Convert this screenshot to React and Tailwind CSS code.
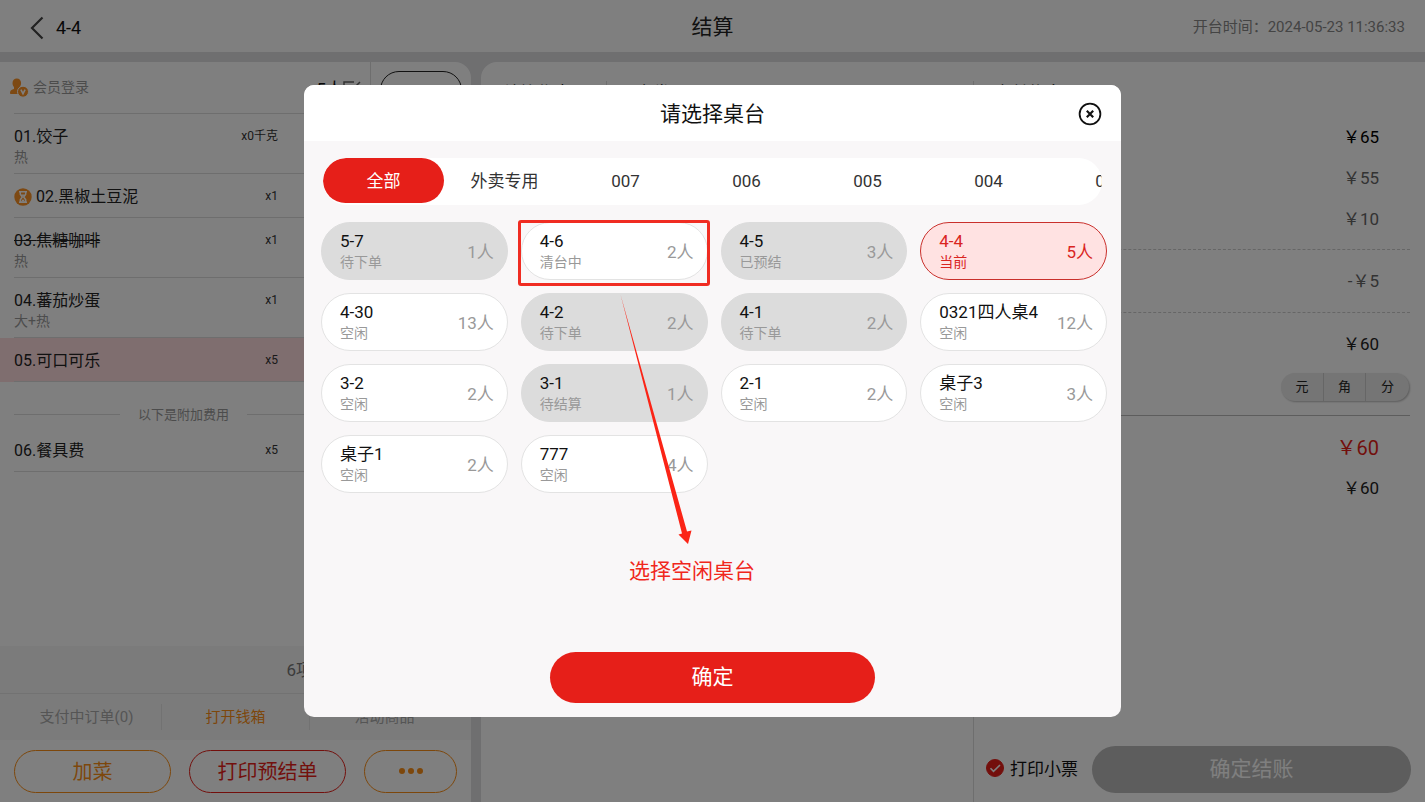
import React, { useState } from 'react';

const dishes = [
    { id: '01', name: '饺子', note: '热', qty: 'x0千克' },
    { id: '02', name: '黑椒土豆泥', qty: 'x1', waiting: true },
    { id: '03', name: '焦糖咖啡', note: '热', qty: 'x1', removed: true },
    { id: '04', name: '蕃茄炒蛋', note: '大+热', qty: 'x1' },
    { id: '05', name: '可口可乐', qty: 'x5', active: true },
];

const extras = [{ id: '06', name: '餐具费', qty: 'x5' }];

const areas = ['全部', '外卖专用', '007', '006', '005', '004', '003'];

const tables = [
    { name: '5-7', status: '待下单', seats: 1, busy: true },
    { name: '4-6', status: '清台中', seats: 2, marked: true },
    { name: '4-5', status: '已预结', seats: 3, busy: true },
    { name: '4-4', status: '当前', seats: 5, current: true },
    { name: '4-30', status: '空闲', seats: 13 },
    { name: '4-2', status: '待下单', seats: 2, busy: true },
    { name: '4-1', status: '待下单', seats: 2, busy: true },
    { name: '0321四人桌4', status: '空闲', seats: 12 },
    { name: '3-2', status: '空闲', seats: 2 },
    { name: '3-1', status: '待结算', seats: 1, busy: true },
    { name: '2-1', status: '空闲', seats: 2 },
    { name: '桌子3', status: '空闲', seats: 3 },
    { name: '桌子1', status: '空闲', seats: 2 },
    { name: '777', status: '空闲', seats: 4 },
];

/* ===================== ICONS ===================== */

const BackIcon = () => (
    <svg width="14" height="24" viewBox="0 0 14 24" fill="none" stroke="#444" strokeWidth="2.2">
        <path d="M12.5 1.5 2 12l10.5 10.5" />
    </svg>
);

const MemberIcon = () => (
    <svg width="19" height="20" viewBox="0 0 19 20">
        <path
            d="M6.8.5c2.600 0 4.300 1.900 4.300 4.400 0 1.800-.6 3.100-1.500 4.200v1.300l3 1.600V16H.8c-.5 0-.8-.3-.8-.8 0-2 .9-3 2.500-3.600l1.500-.7V9.100C3 8 2.500 6.700 2.500 4.900 2.500 2.400 4.200.5 6.800.5z"
            fill="#fb9226"
        />
        <circle cx="13" cy="13.700" r="5.500" fill="#fb9226" stroke="#fff" strokeWidth="1" />
        <path d="M10.900 11.700l2.100 4 2.100-4" fill="none" stroke="#fff" strokeWidth="1.600" />
    </svg>
);

const HourglassIcon = () => (
    <svg width="18" height="18" viewBox="0 0 18 18">
        <circle cx="9" cy="9" r="8.700" fill="#fb9226" />
        <path
            d="M5 3.800h8M5 14.200h8M6.300 4v2.200L8.300 9l-2 2.800V14M11.700 4v2.200L9.700 9l2 2.800V14"
            fill="none"
            stroke="#fff"
            strokeWidth="1.500"
        />
        <path d="M6.500 13.700L9 11.300l2.500 2.400zM7.300 6.500h3.400L9 8.800z" fill="#fff" />
    </svg>
);

const EditIcon = () => (
    <svg width="18" height="18" viewBox="0 0 18 18" fill="none" stroke="#666" strokeWidth="1.500">
        <path d="M11 1H1v16h15V8M17 1l-8.500 8.500" />
    </svg>
);

const CloseIcon = () => (
    <svg width="24" height="24" viewBox="0 0 24 24" fill="none" stroke="#111">
        <circle cx="12" cy="12" r="10.400" strokeWidth="1.800" />
        <path d="M8.800 8.800l6.400 6.400M15.200 8.800l-6.400 6.400" strokeWidth="2.200" />
    </svg>
);

/* ===================== ORDER LIST ===================== */

const DishRow = ({ dish }) => (
    <li className={dish.active ? 'bg-[#ffdcdf]' : ''}>
        <div
            className={`ml-[14px] border-b border-[#dcdcdc] flex items-start justify-between pt-[12px] pr-[193px] ${
                dish.note ? 'h-[60px]' : 'h-[44px]'
            }`}
        >
            <div>
                <p className="flex items-center gap-1 text-[16px] leading-[21px] text-[#222]">
                    {dish.waiting && <HourglassIcon />}
                    <span className={dish.removed ? 'line-through' : ''}>
                        {dish.id}.{dish.name}
                    </span>
                </p>
                {dish.note && (
                    <p className="text-[14px] leading-[20px] text-[#999]">{dish.note}</p>
                )}
            </div>
            <span className="text-[12px] leading-[21px] text-[#333]">{dish.qty}</span>
        </div>
    </li>
);

const OrderPanel = () => (
    <aside className="w-[471px] shrink-0 flex flex-col bg-white rounded-tr-2xl overflow-hidden">
        <div className="h-[51px] flex items-center">
            <button className="flex items-center gap-1 pl-[10px] text-[14px] text-[#999]">
                <MemberIcon />
                会员登录
            </button>
            <div className="ml-auto h-full flex">
                <button className="flex items-center h-[38px] mt-[9px] pr-[9px] text-[17px] text-[#111]">
                    5人
                    <EditIcon />
                </button>
                <div className="border-l border-[#dcdcdc] px-[9px] pt-[9px]">
                    <button className="w-[82px] h-[38px] pt-[4px] rounded-full border border-[#222] text-[14px] text-[#222]">
                        撤台
                    </button>
                </div>
            </div>
        </div>

        <div className="ml-[14px] border-t border-[#dcdcdc]" />
        <ul>
            {dishes.map((dish) => (
                <DishRow key={dish.id} dish={dish} />
            ))}
        </ul>

        <div className="h-[46px] pt-[20px] pl-[14px] flex items-start text-[13px] leading-[26px] text-[#999]">
            <span className="w-[106px] h-[13px] border-b border-[#dcdcdc]" />
            <span className="px-[18px]">以下是附加费用</span>
            <span className="flex-1 h-[13px] border-b border-[#dcdcdc]" />
        </div>

        <ul>
            {extras.map((dish) => (
                <DishRow key={dish.id} dish={dish} />
            ))}
        </ul>

        <div className="mt-auto h-[48px] pt-[2px] bg-[#f7f7f7] border-b border-[#e4e4e4] flex items-center justify-end pr-[14px] gap-4 text-[17px] text-[#777]">
            <span>6项</span>
            <span className="w-[128px] text-right">合计￥65</span>
        </div>
        <div className="h-[46px] bg-[#f7f7f7] px-3 grid grid-cols-3 items-center text-[15px]">
            <button className="h-[26px] text-[#aaa]">支付中订单(0)</button>
            <button className="h-[26px] border-x border-[#e4e4e4] text-[#fb8f17]">打开钱箱</button>
            <button className="h-[26px] text-[#aaa]">活动商品</button>
        </div>
        <div className="h-[62px] px-[14px] flex items-center gap-[18px] text-[20px]">
            <button className="flex-1 h-[43px] pt-[2px] rounded-full border border-[#fb8f17] text-[#fb8f17]">
                加菜
            </button>
            <button className="flex-1 h-[43px] pt-[2px] rounded-full border border-[#e61f19] text-[#e61f19]">
                打印预结单
            </button>
            <button
                aria-label="更多"
                className="w-[93px] h-[43px] rounded-full border border-[#fb8f17] flex items-center justify-center gap-[3px]"
            >
                <span className="size-[6px] rounded-full bg-[#fb8f17]" />
                <span className="size-[6px] rounded-full bg-[#fb8f17]" />
                <span className="size-[6px] rounded-full bg-[#fb8f17]" />
            </button>
        </div>
    </aside>
);

/* ===================== CHECKOUT ===================== */

const Amount = ({ children, className = 'text-[17px] text-[#222]' }) => (
    <p className={`h-[41px] pr-[31px] flex items-center justify-end ${className}`}>{children}</p>
);

const CheckoutPanel = () => {
    const [printTicket, setPrintTicket] = useState(true);

    return (
        <main className="flex-1 flex bg-white rounded-tl-2xl overflow-hidden">
            <section className="flex-1 pt-[19px] pl-[22px] flex items-start text-[17px] leading-[24px] text-[#222]">
                <span className="w-[103px]">结算优惠</span>
                <span className="border-l border-[#dcdcdc] pl-[29px]">卡券</span>
            </section>

            <section className="w-[452px] flex flex-col pt-[19px]">
                <div className="flex-1 border-l border-[#dcdcdc] flex flex-col">
                    <h2 className="pl-[20px] text-[17px] leading-[24px] text-[#222]">支付信息</h2>
                    <div className="ml-[20px] mr-[15px]">
                        <div className="pt-[12px] pb-[9px] border-b border-dashed border-[#ccc]">
                            <Amount className="text-[17px] text-black">￥65</Amount>
                            <Amount className="text-[17px] text-[#666]">￥55</Amount>
                            <Amount className="text-[17px] text-[#666]">￥10</Amount>
                        </div>
                        <div className="pt-[11px] pb-[10px] border-b border-dashed border-[#ccc]">
                            <Amount className="text-[17px] text-[#666]">-￥5</Amount>
                        </div>
                        <div className="pt-[11px] pb-[14px] border-b border-[#bbb]">
                            <Amount>￥60</Amount>
                            <div className="mt-2 mr-px ml-auto w-[128px] h-[28px] grid grid-cols-[42px_43px_1fr] rounded-full overflow-hidden bg-[#ebebeb] shadow-[1px_1px_2px_#bbb] text-[13px] text-[#222]">
                                <button>元</button>
                                <button className="border-x border-[#ccc]">角</button>
                                <button>分</button>
                            </div>
                        </div>
                        <div className="pt-[11px]">
                            <Amount className="text-[20px] text-[#e61f19]">￥60</Amount>
                            <Amount>￥60</Amount>
                        </div>
                    </div>

                    <div className="mt-auto mb-[9px] pl-[12px] pr-[14px] flex items-center gap-[14px]">
                        <label className="flex items-center gap-[6px] text-[17px] text-[#111]">
                            <span className="relative size-[18px] mb-1">
                                <input
                                    type="checkbox"
                                    checked={printTicket}
                                    onChange={(e) => setPrintTicket(e.target.checked)}
                                    className="block size-[18px] appearance-none rounded-full border border-[#e61f19] checked:bg-[#e61f19]"
                                />
                                <svg
                                    className="absolute inset-0 pointer-events-none"
                                    width="18"
                                    height="18"
                                    viewBox="0 0 18 18"
                                    fill="none"
                                    stroke="#fff"
                                    strokeWidth="1.600"
                                >
                                    <path d="M4.500 9.300l3 3 6.500-6.300" />
                                </svg>
                            </span>
                            打印小票
                        </label>
                        <button className="flex-1 h-[47px] rounded-full bg-[#bababa] text-[21px] text-white">
                            确定结账
                        </button>
                    </div>
                </div>
            </section>
        </main>
    );
};

/* ===================== TABLE PICKER ===================== */

const TableCard = ({ table, onPick }) => {
    let box = 'bg-white border-[#e3e3e3]';
    if (table.busy) box = 'bg-[#dcdcdc] border-[#dcdcdc]';
    if (table.current) box = 'bg-[#ffe2e2] border-[#c9302c]';

    return (
        <button
            onClick={onPick}
            className={`relative h-[58px] pt-px pl-[18px] pr-[13px] rounded-full border flex items-center justify-between text-left ${box}`}
        >
            <span>
                <span
                    className={`block text-[17px] leading-[21px] ${
                        table.current ? 'text-[#d9251f]' : 'text-[#111]'
                    }`}
                >
                    {table.name}
                </span>
                <span
                    className={`block text-[14px] leading-[21px] ${
                        table.current ? 'text-[#d9251f]' : 'text-[#999]'
                    }`}
                >
                    {table.status}
                </span>
            </span>
            <span
                className={`pt-[2px] text-[17px] ${
                    table.current ? 'text-[#d9251f]' : 'text-[#999]'
                }`}
            >
                {table.seats}人
            </span>
            {table.marked && (
                <span className="absolute -left-[4px] -right-[3px] -top-[3px] -bottom-[7px] rounded-[3px] border-[3px] border-[#f02c22]" />
            )}
        </button>
    );
};

const TablePicker = () => {
    const [area, setArea] = useState('全部');
    const [picked, setPicked] = useState('4-4');

    return (
        <div className="fixed inset-0 bg-black/50 flex items-center justify-center">
            <div
                role="dialog"
                aria-label="请选择桌台"
                data-picked={picked}
                className="relative w-[817px] max-w-full min-h-[632px] flex flex-col rounded-[10px] overflow-hidden bg-[#f9f7f8]"
            >
                <div className="h-[56px] px-[19px] pt-[2px] bg-white grid grid-cols-[24px_1fr_24px] items-center">
                    <h2 className="col-start-2 pt-[2px] text-center text-[21px] text-[#111]">
                        请选择桌台
                    </h2>
                    <button aria-label="关闭">
                        <CloseIcon />
                    </button>
                </div>

                <div className="mx-[19px] mt-[17px] h-[47px] flex items-start bg-white rounded-full overflow-hidden">
                    {areas.map((a) => (
                        <button
                            key={a}
                            onClick={() => setArea(a)}
                            className={`w-[121px] h-[45px] pt-[2px] shrink-0 rounded-full text-[17px] ${
                                area === a ? 'bg-[#e61f19] text-white' : 'text-[#333]'
                            }`}
                        >
                            {a}
                        </button>
                    ))}
                </div>

                <div className="ml-[17px] mr-[14px] mt-[17px] mb-8 grid grid-cols-4 gap-[13px]">
                    {tables.map((t) => (
                        <TableCard key={t.name} table={t} onPick={() => setPicked(t.name)} />
                    ))}
                </div>

                <button className="mt-auto mb-[14px] mx-auto w-[325px] h-[51px] rounded-full bg-[#e61f19] text-[21px] text-white">
                    确定
                </button>

                {/* hint pointing from the marked table to its caption */}
                <svg
                    className="absolute left-[316px] top-[208px] pointer-events-none"
                    width="76"
                    height="256"
                    viewBox="0 0 76 256"
                    fill="#fb2416"
                >
                    <path d="M0.500 1.500L67 238.500l4.500-1L68 251l-9.500-9.500 3.500-1z" />
                </svg>
                <p className="absolute left-[325px] top-[471px] text-[21px] leading-[30px] text-[#f0271c] pointer-events-none">
                    选择空闲桌台
                </p>
            </div>
        </div>
    );
};

const App = () => {
    return (
        <div className="min-h-screen flex flex-col bg-[#dedee1] font-[Roboto,'Noto_Sans_CJK_SC',sans-serif]">
            <header className="h-[52px] px-[20px] pt-[3px] bg-white grid grid-cols-3 items-center">
                <button className="flex items-center gap-3 pl-[10px] text-[18px] text-[#111]">
                    <BackIcon />
                    4-4
                </button>
                <h1 className="text-center text-[21px] text-[#222]">结算</h1>
                <p className="text-right text-[15px] text-[#888]">开台时间：2024-05-23 11:36:33</p>
            </header>

            <div className="flex-1 flex gap-[10px] mt-[10px]">
                <OrderPanel />
                <CheckoutPanel />
            </div>

            <TablePicker />
        </div>
    );
};

export default App;
